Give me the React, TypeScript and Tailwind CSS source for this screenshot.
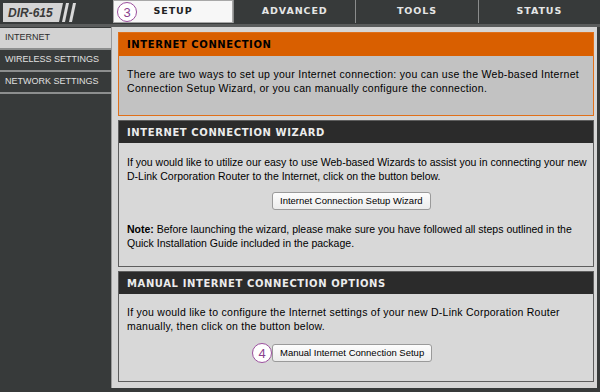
import React from "react";

const sans = { fontFamily: '"Liberation Sans", Arial, sans-serif' };
const verd = { fontFamily: '"DejaVu Sans", Verdana, sans-serif' };

function Circle({ n }: { n: string }) {
  return (
    <div
      className="flex h-[20px] w-[20px] shrink-0 items-center justify-center rounded-full border-[1.5px] border-[#9b4f9e] bg-white text-[13px] leading-none text-[#8a3f8e]"
      style={sans}
    >
      {n}
    </div>
  );
}

function Btn({ children }: { children: React.ReactNode }) {
  return (
    <div
      className="flex h-[18px] items-center whitespace-nowrap rounded-[3px] border border-[#9a9a9a] bg-gradient-to-b from-[#fdfdfd] to-[#ececec] px-[7px] text-[9.5px] text-black"
      style={sans}
    >
      {children}
    </div>
  );
}

export default function App() {
  const tabs = ["ADVANCED", "TOOLS", "STATUS"];
  return (
    <div className="flex h-[392px] w-[600px] flex-col overflow-hidden bg-[#373a3a]">
      {/* top bar */}
      <div className="flex h-[24px] shrink-0">
        <div className="flex w-[113px] items-center pl-[2px]">
          <svg width="80" height="22" viewBox="0 0 80 22">
            <polygon points="1,2 61,2 57,21 1,21" fill="#d4d4d4" />
            <polygon points="64,2 67,2 63,21 60,21" fill="#d9d9d9" />
            <polygon points="71,2 74,2 70,21 67,21" fill="#d9d9d9" />
            <text
              x="6"
              y="16"
              fontSize="12"
              fontStyle="italic"
              fontWeight="bold"
              fill="#3a3a3a"
              fontFamily='"Liberation Sans", Arial, sans-serif'
            >
              DIR-615
            </text>
          </svg>
        </div>
        <div className="relative flex h-[23px] w-[120px] items-center justify-center border border-[#a8a8a8] bg-[#f7f7f7]">
          <div className="absolute left-[3px] top-[1px]">
            <Circle n="3" />
          </div>
          <div className="text-[9.5px] font-bold tracking-[0.9px] text-[#222]" style={verd}>
            SETUP
          </div>
        </div>
        {tabs.map((t) => (
          <div
            key={t}
            className="flex h-[23px] flex-1 items-center justify-center border-l border-[#8a8c8c] text-[9.5px] font-bold tracking-[0.9px] text-[#e6e6e6]"
            style={verd}
          >
            {t}
          </div>
        ))}
      </div>
      <div className="h-[3px] shrink-0 bg-[#5a5c5c]" />
      {/* body */}
      <div className="flex min-h-0 flex-1">
        {/* sidebar */}
        <div className="w-[111px] shrink-0 pt-[1px] text-[9px]" style={sans}>
          <div className="flex h-[22px] items-center border-b-2 border-[#8c8e8e] bg-[#d2d2d2] pl-[5px] text-[#2c2c2c]">
            INTERNET
          </div>
          <div className="flex h-[22px] items-center border-b-2 border-[#8c8e8e] pl-[5px] text-[#e0e0e0]">
            WIRELESS SETTINGS
          </div>
          <div className="flex h-[22px] items-center border-b-2 border-[#8c8e8e] pl-[5px] text-[#e0e0e0]">
            NETWORK SETTINGS
          </div>
        </div>
        {/* content */}
        <div className="mb-[4px] flex w-[486px] flex-col gap-[4px] border-l border-[#9a9a9a] bg-[#d6d6d6] pl-[6px] pr-[3px] pt-[5px]">
          {/* box 1 */}
          <div className="border border-[#e0701a]">
            <div
              className="flex h-[23px] items-center bg-[#d95f00] pl-[8px] text-[10px] font-bold tracking-[0.6px] text-black"
              style={verd}
            >
              INTERNET CONNECTION
            </div>
            <div
              className="whitespace-nowrap bg-[#c2c2c2] pb-[20px] pl-[8px] pt-[11px] text-[10.5px] leading-[14px] tracking-[0.3px] text-black"
              style={sans}
            >
              There are two ways to set up your Internet connection: you can use the Web-based Internet
              <br />
              Connection Setup Wizard, or you can manually configure the connection.
            </div>
          </div>
          {/* box 2 */}
          <div className="border border-[#5e5e5e] bg-[#d8d8d8]">
            <div
              className="flex h-[22px] items-center bg-[#2b2b2b] pl-[8px] text-[10px] font-bold tracking-[0.6px] text-[#ececec]"
              style={verd}
            >
              INTERNET CONNECTION WIZARD
            </div>
            <div
              className="whitespace-nowrap pb-[16px] pl-[8px] pt-[12px] text-[10.5px] leading-[14px] text-black"
              style={sans}
            >
              <div>
                If you would like to utilize our easy to use Web-based Wizards to assist you in connecting your new
                <br />
                D-Link Corporation Router to the Internet, click on the button below.
              </div>
              <div className="ml-[145px] mt-[9px] flex">
                <Btn>Internet Connection Setup Wizard</Btn>
              </div>
              <div className="mt-[12px]">
                <b>Note:</b> Before launching the wizard, please make sure you have followed all steps outlined in the
                <br />
                Quick Installation Guide included in the package.
              </div>
            </div>
          </div>
          {/* box 3 */}
          <div className="border border-[#5e5e5e] bg-[#d8d8d8]">
            <div
              className="flex h-[22px] items-center bg-[#2b2b2b] pl-[8px] text-[10px] font-bold tracking-[0.6px] text-[#ececec]"
              style={verd}
            >
              MANUAL INTERNET CONNECTION OPTIONS
            </div>
            <div
              className="whitespace-nowrap pb-[18px] pl-[8px] pt-[11px] text-[10.5px] leading-[14px] text-black"
              style={sans}
            >
              <div className="tracking-[0.25px]">
                If you would like to configure the Internet settings of your new D-Link Corporation Router
                <br />
                manually, then click on the button below.
              </div>
              <div className="ml-[125px] mt-[10px] flex items-center">
                <Circle n="4" />
                <Btn>Manual Internet Connection Setup</Btn>
              </div>
            </div>
          </div>
        </div>
      </div>
    </div>
  );
}
